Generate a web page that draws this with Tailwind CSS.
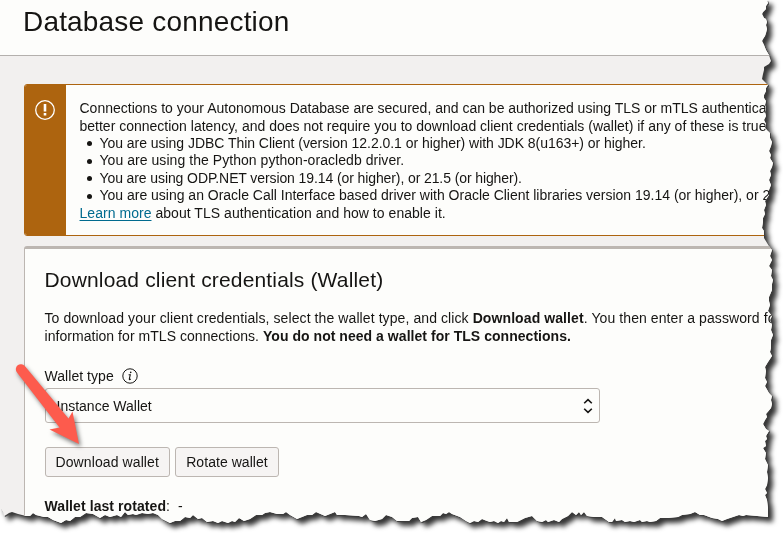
<!DOCTYPE html>
<html lang="en">
<head>
<meta charset="utf-8">
<title>Database connection</title>
<script src="https://cdn.jsdelivr.net/npm/@tailwindcss/browser@4"></script>
</head>
<body class="relative w-[783px] h-[533px] overflow-hidden bg-white font-['Liberation_Sans',Arial,sans-serif] text-[14px] text-[#161513]">
<svg class="absolute w-0 h-0" aria-hidden="true">
  <clipPath id="torn" clipPathUnits="userSpaceOnUse">
    <polygon points="0,0 767,0 768,3 766,6 766,9 763,12 762,14 764,18 766,19 767,22 766,25 767,29 766,33 765,36 763,39 762,41 764,45 766,50 769,55 771,61 769,64 764,67 764,70 763,74 762,79 766,83 768,85 766,88 766,91 764,95 764,98 766,101 765,105 766,108 765,112 766,116 764,120 766,124 765,128 770,133 770,138 772,142 771,146 769,151 771,155 770,158 773,163 772,167 770,171 771,175 769,180 771,185 769,190 769,195 765,201 766,205 764,210 765,214 763,218 763,222 762,228 764,231 764,238 769,246 772,250 770,256 772,260 769,266 772,270 771,276 773,280 772,284 772,290 769,297 769,301 770,305 768,311 772,316 770,320 772,325 771,330 773,335 771,340 771,348 770,352 772,356 768,362 765,367 766,371 765,378 767,382 765,386 769,393 772,396 771,400 772,404 771,408 766,414 767,417 765,420 763,424 766,429 769,431 766,436 767,439 765,441 766,446 763,448 766,453 765,459 768,465 767,472 768,478 767,485 765,489 767,493 765,495 767,500 768,508 768,517 757,516 746,515 743,516 739,515 727,519 722,521 718,519 712,518 704,515 700,515 695,512 690,514 682,515 678,517 668,518 660,518 656,521 650,522 647,521 642,522 640,520 634,522 630,521 625,522 622,520 616,521 615,518 612,522 609,522 602,517 594,517 587,516 584,512 581,515 579,512 576,515 572,512 568,516 562,519 559,522 554,520 548,522 546,520 542,522 537,521 532,516 525,518 517,522 509,522 507,518 504,522 501,521 498,523 494,521 490,522 487,521 482,519 478,522 474,521 470,523 466,521 460,517 452,514 449,512 446,514 443,513 440,516 432,516 426,520 421,522 418,517 412,518 409,521 397,521 392,517 386,515 382,519 375,521 370,520 366,514 362,517 359,516 345,515 337,515 335,512 330,514 325,516 316,512 312,515 307,515 302,517 297,519 290,515 286,512 283,514 277,514 270,512 265,513 262,515 256,515 250,519 244,521 239,518 235,522 232,521 228,523 222,521 218,523 213,521 207,522 202,518 198,519 193,515 190,518 185,517 180,521 175,521 170,523 162,519 158,515 153,513 148,514 142,513 136,515 133,514 128,515 125,512 121,517 117,515 110,517 105,515 100,518 93,514 86,513 80,517 75,517 70,521 66,520 61,523 53,520 48,517 44,517 36,515 33,513 30,516 26,516 18,514 12,512 9,513 6,515 4,516 3,512 0,508"/>
  </clipPath>
</svg>
<div class="filter-[drop-shadow(1px_1px_0px_rgba(60,60,60,0.85))_drop-shadow(4px_4px_2.5px_rgba(0,0,0,0.8))]">
<main class="w-[783px] h-[533px] overflow-hidden bg-[#f2f0ef] [clip-path:url(#torn)]">
  <header class="h-14 border-b border-[#b4b0ad] bg-[#fdfdfb] pl-[23px] pt-[5px]">
    <h1 class="text-[28px] leading-[34px] tracking-[0.18px] whitespace-nowrap">Database connection</h1>
  </header>
  <section class="ml-6 mt-7 w-[900px] h-[152px] flex rounded-[3px] border border-[#ad640f] bg-[#fdfdfb] overflow-hidden">
    <div class="w-[41px] shrink-0 bg-[#ad640f] pl-[10px] pt-[15px]">
      <svg class="w-5 h-5" viewBox="0 0 20 20" fill="none" stroke="#fff"><circle cx="10" cy="10" r="9.3" stroke-width="1.3"/><path d="M10 4v7.6M10 13v2.4" stroke-width="2.6"/></svg>
    </div>
    <div class="pl-[13.5px] pt-[15px] leading-[17.5px] whitespace-nowrap">
      <p>Connections to your Autonomous Database are secured, and can be authorized using TLS or mTLS authentication.</p>
      <p>better connection latency, and does not require you to download client credentials (wallet) if any of these is true:</p>
      <ul class="-mt-[0.2px] mb-[0.2px]">
        <li class="flex items-center tracking-[-0.04px]"><i class="ml-[7.5px] mr-[7.5px] size-[5px] rounded-full bg-[#161513]"></i>You are using JDBC Thin Client (version 12.2.0.1 or higher) with JDK 8(u163+) or higher.</li>
        <li class="flex items-center tracking-[0.05px]"><i class="ml-[7.5px] mr-[7.5px] size-[5px] rounded-full bg-[#161513]"></i>You are using the Python python-oracledb driver.</li>
        <li class="flex items-center tracking-[-0.1px]"><i class="ml-[7.5px] mr-[7.5px] size-[5px] rounded-full bg-[#161513]"></i>You are using ODP.NET version 19.14 (or higher), or 21.5 (or higher).</li>
        <li class="flex items-center tracking-[-0.01px]"><i class="ml-[7.5px] mr-[7.5px] size-[5px] rounded-full bg-[#161513]"></i>You are using an Oracle Call Interface based driver with Oracle Client libraries version 19.14 (or higher), or 21.5</li>
      </ul>
      <p class="tracking-[0.04px]"><a class="text-[#006b8f] underline underline-offset-2">Learn more</a> about TLS authentication and how to enable it.</p>
    </div>
  </section>
  <section class="ml-6 mt-[10px] w-[900px] h-[320px] rounded-[3px] border border-t-[3px] border-[#bcb6b1] bg-[#fdfdfb] pl-[19.5px] pt-[16px] whitespace-nowrap">
    <h2 class="text-[21px] leading-[30px] tracking-[0.16px]">Download client credentials (Wallet)</h2>
    <div class="mt-[14px] leading-[18px]">
      <p class="tracking-[0.09px]">To download your client credentials, select the wallet type, and click <b>Download wallet</b>. You then enter a password for</p>
      <p class="tracking-[0.04px]">information for mTLS connections. <b>You do not need a wallet for TLS connections.</b></p>
    </div>
    <div class="mt-[22px] flex items-center gap-2 h-[18px]">
      <span class="tracking-[0.05px]">Wallet type</span>
      <svg class="w-4 h-4" viewBox="0 0 16 16" fill="none" stroke="#161513"><circle cx="8" cy="8" r="7.2" stroke-width="1"/><path d="M6.6 6.7h1.7L7.3 11q-.1.8.7.5l.8-.4" stroke-width="1.1"/><circle cx="8.7" cy="4.4" r=".8" fill="#161513" stroke="none"/></svg>
    </div>
    <div class="mt-[3px] flex items-center justify-between w-[555.5px] h-[35px] rounded-[3px] border border-[#bcb6b1] pl-[11px] pr-[6px]">
      <span class="pt-[2px]">Instance Wallet</span>
      <svg class="w-[10px] h-[16px]" viewBox="0 0 10 16" fill="none" stroke="#161513" stroke-width="1.6"><path d="M1.2 5.3 5 1.6l3.8 3.7M1.2 10.7 5 14.4l3.8-3.7"/></svg>
    </div>
    <div class="mt-6 flex gap-[5px]">
      <button class="w-[125.5px] h-[30px] rounded-[3px] border border-[#bcb6b1] bg-[#f6f4f3] tracking-[0.1px]">Download wallet</button>
      <button class="w-[104px] h-[30px] rounded-[3px] border border-[#bcb6b1] bg-[#f6f4f3] tracking-[0.05px]">Rotate wallet</button>
    </div>
    <p class="mt-5 leading-[18px] tracking-[0.08px]"><b>Wallet last rotated</b>: <span class="ml-1">-</span></p>
  </section>
</main>
</div>
<svg class="absolute left-0 top-[350px] w-[110px] h-[110px] overflow-visible filter-[drop-shadow(2px_3px_2px_rgba(0,0,0,0.5))]" viewBox="0 350 110 110" fill="#fd5b4d">
  <path d="M17 372.5A4.9 4.9 0 0 1 24.8 366L68.5 418.5 72.5 411.5 79 444 49.5 429.5 59.5 427.5Z"/>
</svg>
</body>
</html>
